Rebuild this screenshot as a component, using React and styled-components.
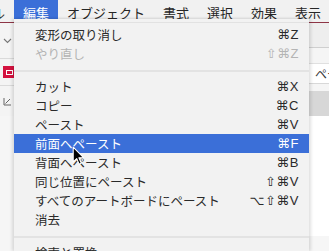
import React from "react";
import styled, { createGlobalStyle } from "styled-components";

const Global = createGlobalStyle`
  html, body { margin: 0; padding: 0; background: #ffffff; }
  body { width: 329px; height: 251px; overflow: hidden; }
  * { box-sizing: border-box; }
`;

const JP = `"Noto Sans CJK JP", "Noto Sans", sans-serif`;
const KEYS = `"Liberation Sans", "DejaVu Sans", sans-serif`;

const Screen = styled.div`
  position: relative;
  width: 329px;
  height: 251px;
  overflow: hidden;
  display: flex;
  flex-direction: column;
  background: #ffffff;
  font-family: ${JP};
`;

const MenuBar = styled.div`
  display: flex;
  height: 19px;
  background: #f1f1f1;
  flex: none;
`;

const BarItem = styled.div`
  flex: none;
  height: 19px;
  padding: 6px 9px 0 9px;
  margin-left: ${(p) => (p.$offset ? p.$offset : "0px")};
  font-size: 13px;
  line-height: 14px;
  color: ${(p) => (p.$active ? "#ffffff" : "#262626")};
  background: ${(p) => (p.$active ? "#3b6fd8" : "transparent")};
  white-space: nowrap;
`;

const Body = styled.div`
  flex: 1;
  display: flex;
  min-height: 0;
`;

const SideStrip = styled.div`
  flex: none;
  width: ${(p) => p.$w}px;
  display: flex;
  flex-direction: column;
  background: #f6f6f6;
  overflow: hidden;
`;

const StripTop = styled.div`
  height: 4px;
  flex: none;
  background: #f1f1f1;
  border-bottom: 1px solid #8e3546;
`;

const StripBand = styled.div`
  flex: none;
  height: ${(p) => p.$h}px;
  background: ${(p) => p.$bg || "#f4f4f4"};
  border-bottom: ${(p) => (p.$line ? `1px solid ${p.$line}` : "none")};
  display: flex;
  align-items: center;
  padding-left: ${(p) => p.$pl || 0}px;
  font-size: 12px;
  color: #333;
  white-space: nowrap;
`;

const RedSwatch = styled.div`
  width: 11px;
  height: 12px;
  background: #d4123f;
  margin-left: 3px;
  display: flex;
  align-items: center;
  justify-content: flex-end;
`;

const SwatchInner = styled.div`
  width: 7px;
  height: 5px;
  border: 1px solid #ffffff;
  margin-right: 1px;
`;

const Menu = styled.div`
  flex: none;
  width: 295px;
  background: #f2f2f2;
  padding-top: 3px;
  box-shadow: -2px 0 3px rgba(0, 0, 0, 0.12), 2px 0 3px rgba(0, 0, 0, 0.12);
  position: relative;
  z-index: 1;
`;

const MenuInner = styled.div`
  border-top: 1px solid #e2e2e2;
  padding-top: 2px;
`;

const Row = styled.div`
  height: 19px;
  display: flex;
  align-items: center;
  justify-content: space-between;
  padding: 0 10px 0 21px;
  background: ${(p) => (p.$active ? "#3b6fd8" : "transparent")};
  color: ${(p) => (p.$active ? "#ffffff" : p.$disabled ? "#b4b4b4" : "#2a2a2a")};
`;

const Label = styled.span`
  font-family: ${JP};
  font-size: 12.5px;
  line-height: 19px;
  white-space: nowrap;
`;

const Keys = styled.span`
  font-family: ${KEYS};
  font-size: 13px;
  line-height: 19px;
  white-space: nowrap;
  letter-spacing: 0.5px;
`;

const Separator = styled.div`
  height: 14px;
  padding-top: 7px;
  &::after {
    content: "";
    display: block;
    height: 2px;
    background: #e3e3e3;
  }
`;

const Cursor = styled.svg`
  position: absolute;
  left: 72px;
  top: 146px;
  z-index: 5;
`;

const items = [
  { label: "変形の取り消し", keys: "⌘Z" },
  { label: "やり直し", keys: "⇧⌘Z", disabled: true },
  { sep: true },
  { label: "カット", keys: "⌘X" },
  { label: "コピー", keys: "⌘C" },
  { label: "ペースト", keys: "⌘V" },
  { label: "前面へペースト", keys: "⌘F", active: true },
  { label: "背面へペースト", keys: "⌘B" },
  { label: "同じ位置にペースト", keys: "⇧⌘V" },
  { label: "すべてのアートボードにペースト", keys: "⌥⇧⌘V" },
  { label: "消去", keys: "" },
  { sep: true },
  { label: "検索と置換", keys: "" },
];

export default function App() {
  return (
    <>
      <Global />
      <Screen>
        <MenuBar>
          <BarItem $offset="-56px">ファイル</BarItem>
          <BarItem $active>編集</BarItem>
          <BarItem>オブジェクト</BarItem>
          <BarItem>書式</BarItem>
          <BarItem>選択</BarItem>
          <BarItem>効果</BarItem>
          <BarItem>表示</BarItem>
        </MenuBar>
        <Body>
          <SideStrip $w={14}>
            <StripTop />
            <StripBand $h={36} $line="#dadada" $pl={3}>
              <svg width="9" height="6" viewBox="0 0 9 6">
                <path d="M1 1 L4.5 4.5 L8 1" fill="none" stroke="#777" strokeWidth="1.1" />
              </svg>
            </StripBand>
            <StripBand $h={27} $line="#dadada">
              <RedSwatch>
                <SwatchInner />
              </RedSwatch>
            </StripBand>
            <StripBand $h={30} $pl={3}>
              <svg width="9" height="9" viewBox="0 0 9 9">
                <path d="M1 1 L1 8 L8 8" fill="none" stroke="#666" strokeWidth="1" />
                <path d="M2.5 6.5 L7 2" fill="none" stroke="#666" strokeWidth="1" />
              </svg>
            </StripBand>
          </SideStrip>
          <Menu>
            <MenuInner>
              {items.map((it, i) =>
                it.sep ? (
                  <Separator key={i} />
                ) : (
                  <Row key={i} $active={it.active} $disabled={it.disabled}>
                    <Label>{it.label}</Label>
                    <Keys>{it.keys}</Keys>
                  </Row>
                )
              )}
            </MenuInner>
          </Menu>
          <SideStrip $w={20}>
            <StripTop />
            <StripBand $h={25} $bg="#eeeeee" $line="#cfcfcf" />
            <StripBand $h={16} $bg="#f5f5f5" $line="#e0e0e0" />
            <StripBand $h={20} $bg="#ffffff" $line="#d8d8d8" $pl={6}>
              ペースト
            </StripBand>
            <StripBand $h={7} $bg="#f5f5f5" />
            <StripBand $h={25} $bg="#d7d7d7" />
            <StripBand $h={120} $bg="#ffffff" />
          </SideStrip>
        </Body>
        <Cursor width="14" height="20" viewBox="0 0 13 19">
          <path
            d="M1 1 L1 15 L4.3 11.9 L6.6 17.2 L8.6 16.3 L6.4 11.1 L10.8 11.1 Z"
            fill="#000"
            stroke="#fff"
            strokeWidth="1"
            strokeLinejoin="round"
          />
        </Cursor>
      </Screen>
    </>
  );
}
